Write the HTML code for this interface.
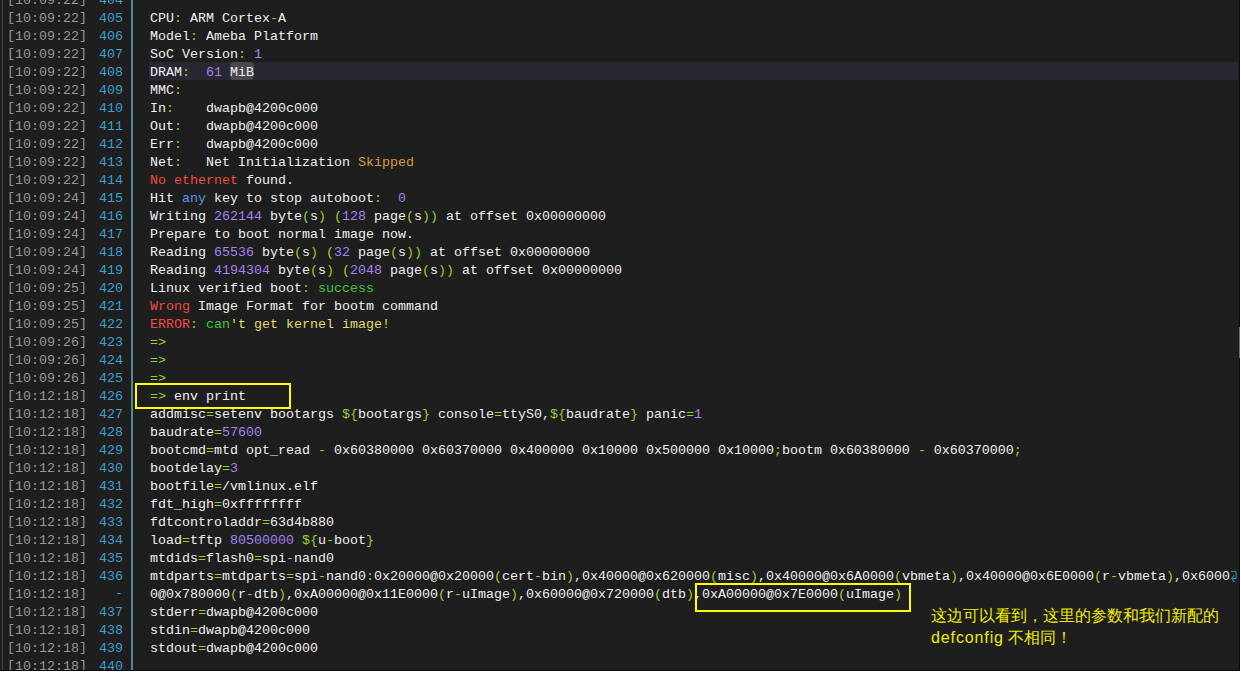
<!DOCTYPE html>
<html><head><meta charset="utf-8"><style>
html,body{margin:0;padding:0;background:#fff;}
body{width:1241px;height:691px;position:relative;overflow:hidden;}
#term{position:absolute;left:0;top:0;width:1239px;height:670px;background:#1e1e1e;overflow:hidden;}
#rb{position:absolute;left:1239px;top:0;width:1px;height:671px;background:#0c0c0c;}
#thumb{position:absolute;left:1239px;top:327px;width:1px;height:31px;background:#6a6a6a;}
#bb{position:absolute;left:0;top:670px;width:1240px;height:1px;background:#0c0c0c;}
#lline{position:absolute;left:2px;top:0;width:1px;height:670px;background:#444;}
#sep{position:absolute;left:131px;top:0;width:2px;height:670px;background:#4b8b99;}
.row{position:absolute;left:0;width:1239px;height:18px;font-family:"Liberation Mono",monospace;font-size:13.333px;line-height:18px;white-space:pre;color:#f0f0f0;}
.row.hl::before{content:"";position:absolute;left:149px;top:0;width:1089px;height:18px;background:#282833;}
.ts{position:absolute;left:7px;top:2px;color:#969696;}
.ln{position:absolute;left:83px;width:40px;text-align:right;top:2px;color:#3a9fcf;}
.c{position:absolute;left:150px;top:2px;}
i{font-style:normal;}
.br{font-weight:normal;position:relative;top:-1px;}
.g{color:#96d030;}
.p{color:#a582ef;}
.b{color:#5f93e4;}
.r{color:#ee4a3e;}
.s{color:#3cc83c;}
.y{color:#e2d86c;}
.o{color:#d29a3e;}
.mib{position:absolute;left:230px;top:0px;width:24px;height:18px;background:#48484d;border-radius:4px;}
.wrap{display:inline-block;width:8px;height:18px;vertical-align:top;position:relative;}
.box{position:absolute;border:2px solid #ffff00;box-sizing:border-box;}
.note{position:absolute;left:931px;top:605px;font-family:"Liberation Sans",sans-serif;font-size:16px;line-height:22px;color:#f0ea00;white-space:pre;}
</style></head><body>
<div id="term">
<div id="lline"></div>
<div id="sep"></div>
<div class="row" style="top:-10px"><span class="ts"><b class="br">[</b>10:09:22<b class="br">]</b></span><span class="ln">404</span><span class="c"></span></div>
<div class="row" style="top:8px"><span class="ts"><b class="br">[</b>10:09:22<b class="br">]</b></span><span class="ln">405</span><span class="c">CPU<i class="g">:</i> ARM Cortex<i class="g">-</i>A</span></div>
<div class="row" style="top:26px"><span class="ts"><b class="br">[</b>10:09:22<b class="br">]</b></span><span class="ln">406</span><span class="c">Model<i class="g">:</i> Ameba Platform</span></div>
<div class="row" style="top:44px"><span class="ts"><b class="br">[</b>10:09:22<b class="br">]</b></span><span class="ln">407</span><span class="c">SoC Version<i class="g">:</i> <i class="p">1</i></span></div>
<div class="row hl" style="top:62px"><div class="mib"></div><span class="ts"><b class="br">[</b>10:09:22<b class="br">]</b></span><span class="ln">408</span><span class="c">DRAM<i class="g">:</i>  <i class="p">61</i> MiB</span></div>
<div class="row" style="top:80px"><span class="ts"><b class="br">[</b>10:09:22<b class="br">]</b></span><span class="ln">409</span><span class="c">MMC<i class="g">:</i></span></div>
<div class="row" style="top:98px"><span class="ts"><b class="br">[</b>10:09:22<b class="br">]</b></span><span class="ln">410</span><span class="c">In<i class="g">:</i>    dwapb@4200c000</span></div>
<div class="row" style="top:116px"><span class="ts"><b class="br">[</b>10:09:22<b class="br">]</b></span><span class="ln">411</span><span class="c">Out<i class="g">:</i>   dwapb@4200c000</span></div>
<div class="row" style="top:134px"><span class="ts"><b class="br">[</b>10:09:22<b class="br">]</b></span><span class="ln">412</span><span class="c">Err<i class="g">:</i>   dwapb@4200c000</span></div>
<div class="row" style="top:152px"><span class="ts"><b class="br">[</b>10:09:22<b class="br">]</b></span><span class="ln">413</span><span class="c">Net<i class="g">:</i>   Net Initialization <i class="o">Skipped</i></span></div>
<div class="row" style="top:170px"><span class="ts"><b class="br">[</b>10:09:22<b class="br">]</b></span><span class="ln">414</span><span class="c"><i class="r">No ethernet</i> found.</span></div>
<div class="row" style="top:188px"><span class="ts"><b class="br">[</b>10:09:24<b class="br">]</b></span><span class="ln">415</span><span class="c">Hit <i class="b">any</i> key to stop autoboot<i class="g">:</i>  <i class="p">0</i></span></div>
<div class="row" style="top:206px"><span class="ts"><b class="br">[</b>10:09:24<b class="br">]</b></span><span class="ln">416</span><span class="c">Writing <i class="p">262144</i> byte<i class="g">(</i>s<i class="g">)</i> <i class="g">(</i><i class="p">128</i> page<i class="g">(</i>s<i class="g">))</i> at offset 0x00000000</span></div>
<div class="row" style="top:224px"><span class="ts"><b class="br">[</b>10:09:24<b class="br">]</b></span><span class="ln">417</span><span class="c">Prepare to boot normal image now.</span></div>
<div class="row" style="top:242px"><span class="ts"><b class="br">[</b>10:09:24<b class="br">]</b></span><span class="ln">418</span><span class="c">Reading <i class="p">65536</i> byte<i class="g">(</i>s<i class="g">)</i> <i class="g">(</i><i class="p">32</i> page<i class="g">(</i>s<i class="g">))</i> at offset 0x00000000</span></div>
<div class="row" style="top:260px"><span class="ts"><b class="br">[</b>10:09:24<b class="br">]</b></span><span class="ln">419</span><span class="c">Reading <i class="p">4194304</i> byte<i class="g">(</i>s<i class="g">)</i> <i class="g">(</i><i class="p">2048</i> page<i class="g">(</i>s<i class="g">))</i> at offset 0x00000000</span></div>
<div class="row" style="top:278px"><span class="ts"><b class="br">[</b>10:09:25<b class="br">]</b></span><span class="ln">420</span><span class="c">Linux verified boot<i class="g">:</i> <i class="s">success</i></span></div>
<div class="row" style="top:296px"><span class="ts"><b class="br">[</b>10:09:25<b class="br">]</b></span><span class="ln">421</span><span class="c"><i class="r">Wrong</i> Image Format for bootm command</span></div>
<div class="row" style="top:314px"><span class="ts"><b class="br">[</b>10:09:25<b class="br">]</b></span><span class="ln">422</span><span class="c"><i class="r">ERROR</i><i class="g">:</i> <i class="s">can</i><i class="y">'t get kernel image!</i></span></div>
<div class="row" style="top:332px"><span class="ts"><b class="br">[</b>10:09:26<b class="br">]</b></span><span class="ln">423</span><span class="c"><i class="g">=&gt;</i></span></div>
<div class="row" style="top:350px"><span class="ts"><b class="br">[</b>10:09:26<b class="br">]</b></span><span class="ln">424</span><span class="c"><i class="g">=&gt;</i></span></div>
<div class="row" style="top:368px"><span class="ts"><b class="br">[</b>10:09:26<b class="br">]</b></span><span class="ln">425</span><span class="c"><i class="g">=&gt;</i></span></div>
<div class="row" style="top:386px"><span class="ts"><b class="br">[</b>10:12:18<b class="br">]</b></span><span class="ln">426</span><span class="c"><i class="g">=&gt;</i> env print</span></div>
<div class="row" style="top:404px"><span class="ts"><b class="br">[</b>10:12:18<b class="br">]</b></span><span class="ln">427</span><span class="c">addmisc<i class="g">=</i>setenv bootargs <i class="g">${</i>bootargs<i class="g">}</i> console<i class="g">=</i>ttyS0,<i class="g">${</i>baudrate<i class="g">}</i> panic<i class="g">=</i><i class="p">1</i></span></div>
<div class="row" style="top:422px"><span class="ts"><b class="br">[</b>10:12:18<b class="br">]</b></span><span class="ln">428</span><span class="c">baudrate<i class="g">=</i><i class="p">57600</i></span></div>
<div class="row" style="top:440px"><span class="ts"><b class="br">[</b>10:12:18<b class="br">]</b></span><span class="ln">429</span><span class="c">bootcmd<i class="g">=</i>mtd opt_read <i class="g">-</i> 0x60380000 0x60370000 0x400000 0x10000 0x500000 0x10000<i class="g">;</i>bootm 0x60380000 <i class="g">-</i> 0x60370000<i class="g">;</i></span></div>
<div class="row" style="top:458px"><span class="ts"><b class="br">[</b>10:12:18<b class="br">]</b></span><span class="ln">430</span><span class="c">bootdelay<i class="g">=</i><i class="p">3</i></span></div>
<div class="row" style="top:476px"><span class="ts"><b class="br">[</b>10:12:18<b class="br">]</b></span><span class="ln">431</span><span class="c">bootfile<i class="g">=</i>/vmlinux.elf</span></div>
<div class="row" style="top:494px"><span class="ts"><b class="br">[</b>10:12:18<b class="br">]</b></span><span class="ln">432</span><span class="c">fdt_high<i class="g">=</i>0xffffffff</span></div>
<div class="row" style="top:512px"><span class="ts"><b class="br">[</b>10:12:18<b class="br">]</b></span><span class="ln">433</span><span class="c">fdtcontroladdr<i class="g">=</i>63d4b880</span></div>
<div class="row" style="top:530px"><span class="ts"><b class="br">[</b>10:12:18<b class="br">]</b></span><span class="ln">434</span><span class="c">load<i class="g">=</i>tftp <i class="p">80500000</i> <i class="g">${</i>u<i class="g">-</i>boot<i class="g">}</i></span></div>
<div class="row" style="top:548px"><span class="ts"><b class="br">[</b>10:12:18<b class="br">]</b></span><span class="ln">435</span><span class="c">mtdids<i class="g">=</i>flash0<i class="g">=</i>spi<i class="g">-</i>nand0</span></div>
<div class="row" style="top:566px"><span class="ts"><b class="br">[</b>10:12:18<b class="br">]</b></span><span class="ln">436</span><span class="c">mtdparts<i class="g">=</i>mtdparts<i class="g">=</i>spi<i class="g">-</i>nand0<i class="g">:</i>0x20000@0x20000<i class="g">(</i>cert<i class="g">-</i>bin<i class="g">)</i>,0x40000@0x620000<i class="g">(</i>misc<i class="g">)</i>,0x40000@0x6A0000<i class="g">(</i>vbmeta<i class="g">)</i>,0x40000@0x6E0000<i class="g">(</i>r<i class="g">-</i>vbmeta<i class="g">)</i>,0x6000<i class="wrap"><svg width="10" height="18" viewBox="0 0 10 18" style="position:absolute;left:0;top:-2px"><path d="M1 5.5H5Q6.1 5.5 6.1 6.6V12.4H1.8M4.3 9.4L1.6 12.4L4.6 15.8" fill="none" stroke="#1a98b0" stroke-width="1.05"/></svg></i></span></div>
<div class="row" style="top:584px"><span class="ts"><b class="br">[</b>10:12:18<b class="br">]</b></span><span class="ln" style="top:1px">-</span><span class="c">0@0x780000<i class="g">(</i>r<i class="g">-</i>dtb<i class="g">)</i>,0xA00000@0x11E0000<i class="g">(</i>r<i class="g">-</i>uImage<i class="g">)</i>,0x60000@0x720000<i class="g">(</i>dtb<i class="g">)</i>,0xA00000@0x7E0000<i class="g">(</i>uImage<i class="g">)</i></span></div>
<div class="row" style="top:602px"><span class="ts"><b class="br">[</b>10:12:18<b class="br">]</b></span><span class="ln">437</span><span class="c">stderr<i class="g">=</i>dwapb@4200c000</span></div>
<div class="row" style="top:620px"><span class="ts"><b class="br">[</b>10:12:18<b class="br">]</b></span><span class="ln">438</span><span class="c">stdin<i class="g">=</i>dwapb@4200c000</span></div>
<div class="row" style="top:638px"><span class="ts"><b class="br">[</b>10:12:18<b class="br">]</b></span><span class="ln">439</span><span class="c">stdout<i class="g">=</i>dwapb@4200c000</span></div>
<div class="row" style="top:656px"><span class="ts"><b class="br">[</b>10:12:18<b class="br">]</b></span><span class="ln">440</span><span class="c"></span></div>
<div class="box" style="left:135px;top:383px;width:156px;height:26px"></div>
<div class="box" style="left:695px;top:583px;width:216px;height:29px"></div>
<div class="note">这边可以看到，这里的参数和我们新配的
<span style="letter-spacing:0.88px">defconfig</span> 不相同！</div>
</div>
<div id="rb"></div><div id="thumb"></div><div id="bb"></div>
</body></html>
